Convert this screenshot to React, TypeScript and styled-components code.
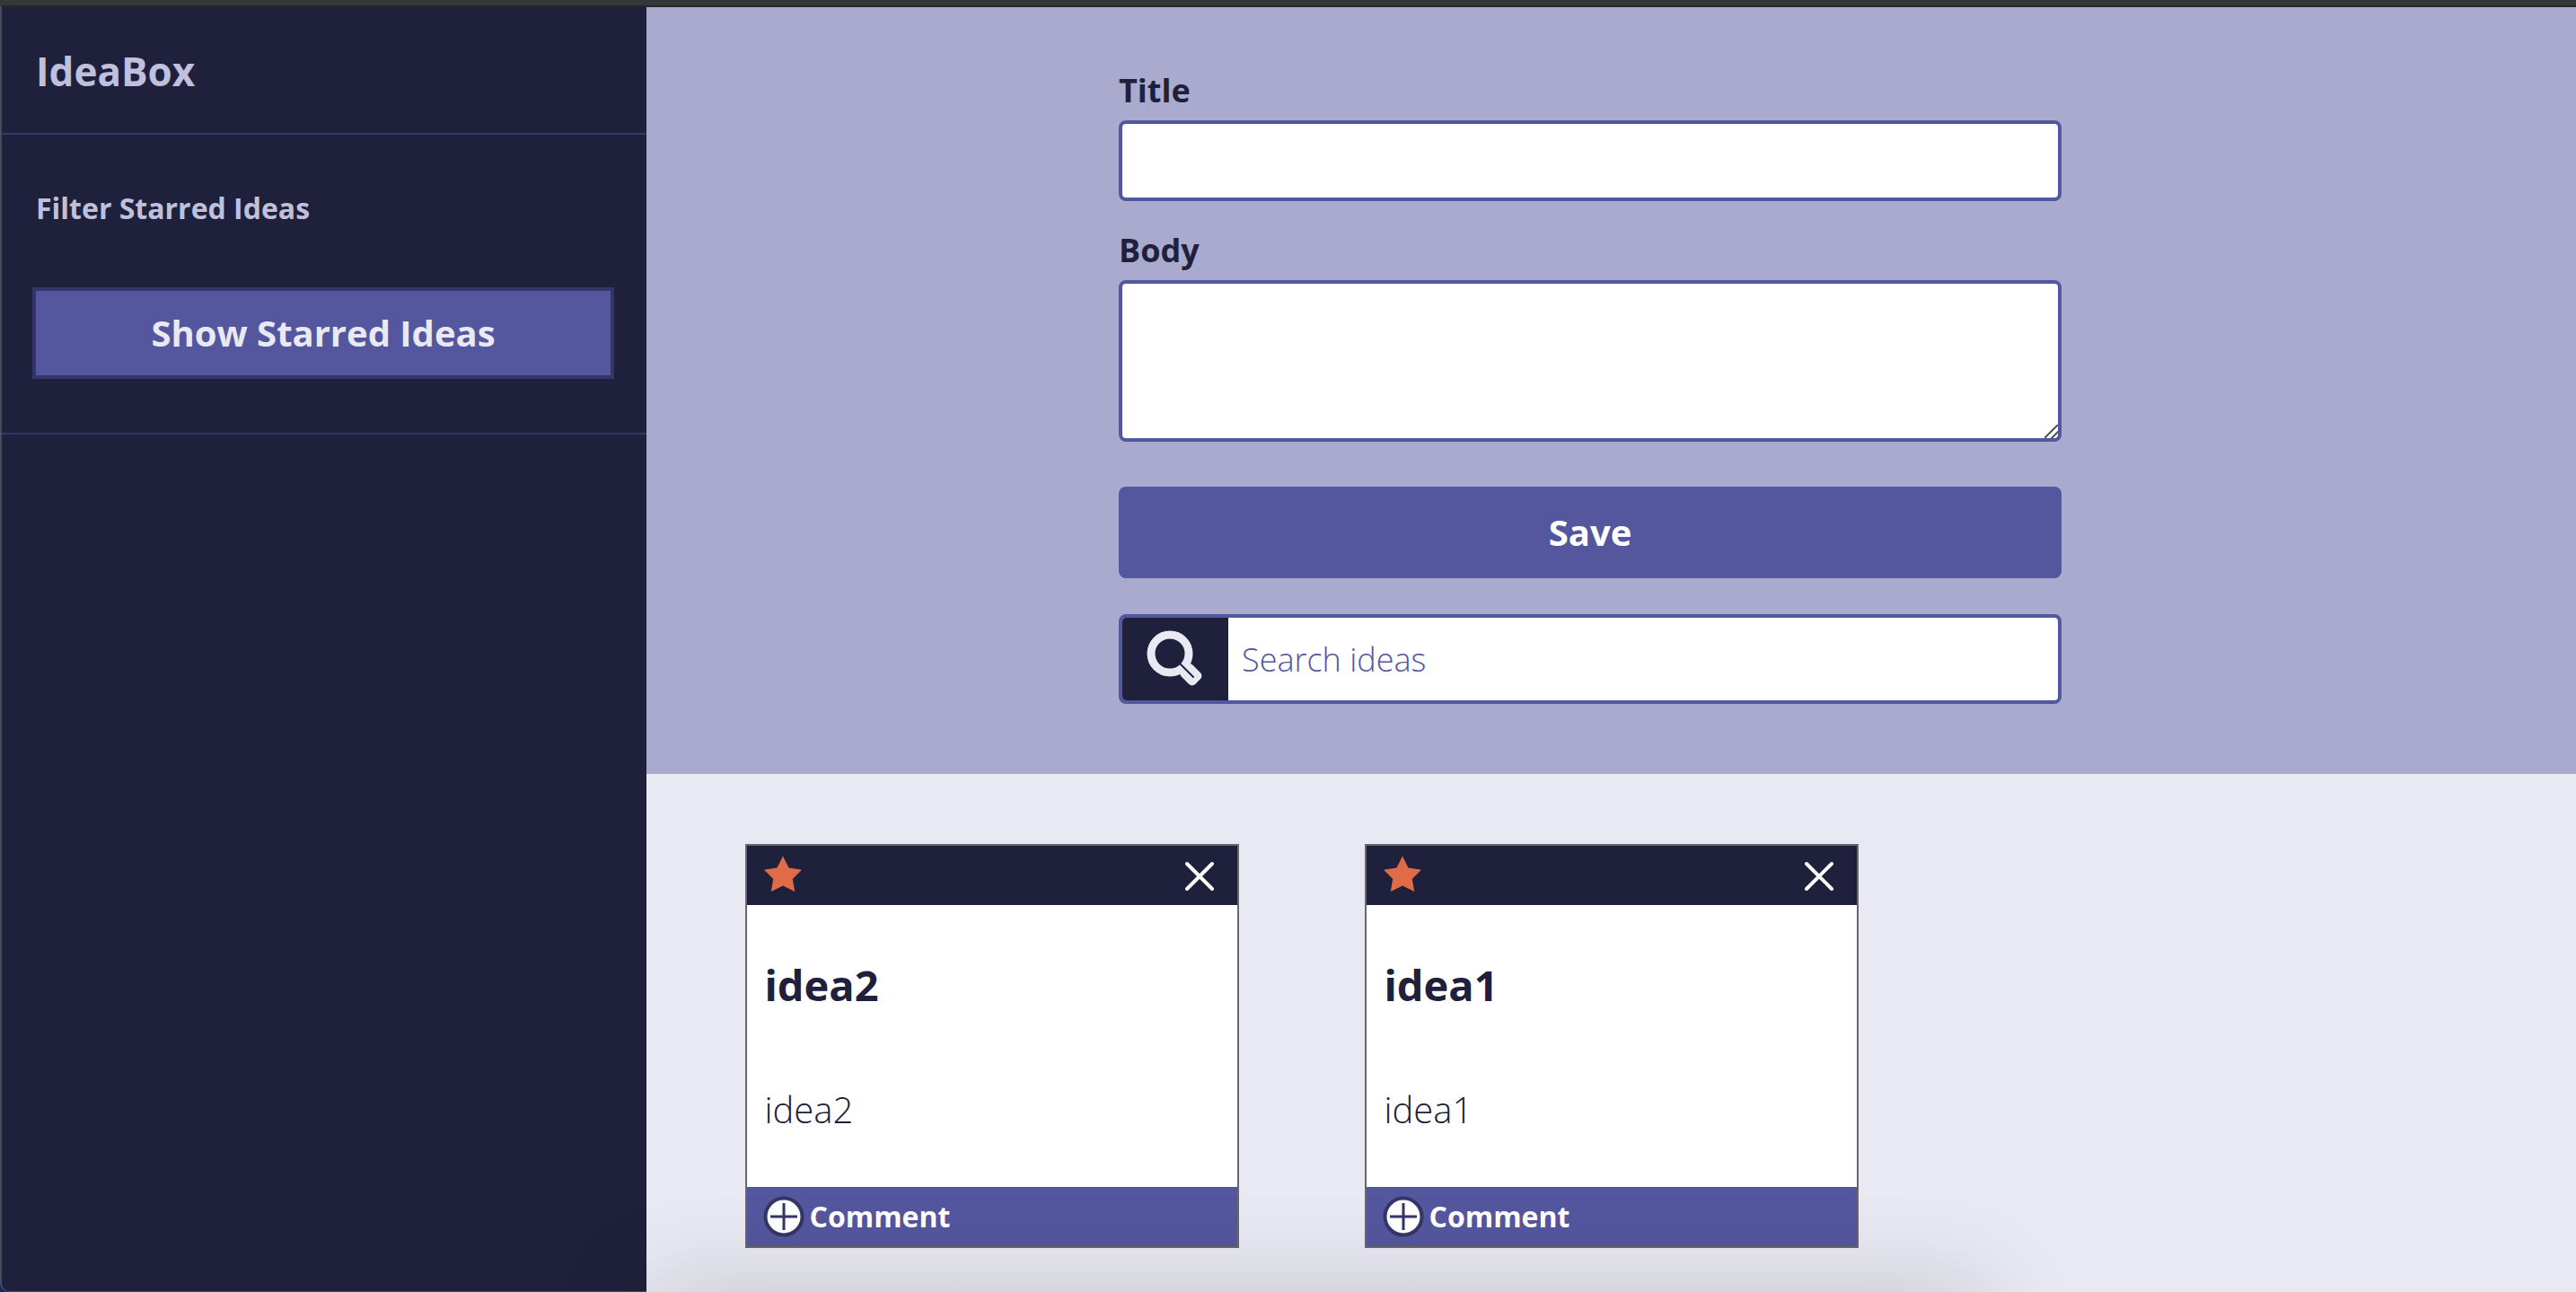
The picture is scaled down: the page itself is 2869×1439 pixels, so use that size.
import React from "react";
import styled, { createGlobalStyle } from "styled-components";

const colors = {
  ink: "#1f203b",
  line: "#353567",
  primary: "#5356a0",
  primaryButton: "#54579e",
  lavender: "#a9aace",
  mist: "#c0c0dc",
  pale: "#e9e9f3",
  star: "#e06b46",
  cardEdge: "#6b656d",
};

const Global = createGlobalStyle`
  *, *::before, *::after { box-sizing: border-box; }
  body {
    margin: 0;
    background: ${colors.pale};
    color: ${colors.ink};
    font-family: "Open Sans", "Noto Sans", sans-serif;
  }
  button, input, textarea { font-family: inherit; }
  h1, h2, h3, p { margin: 0; }
`;

const Page = styled.div`
  display: flex;
  min-height: 100vh;
  border-top: 6px solid #353638;
  background: #0d2c5c;
  overflow: hidden;
`;

const Sidebar = styled.aside`
  flex: 0 0 720px;
  background: ${colors.ink};
  color: ${colors.mist};
  border-top: 2px solid #262727;
  border-left: 2px solid #4a4a5e;
  border-bottom: 1px solid #4a4a5e;
  border-bottom-left-radius: 10px;
`;

const Brand = styled.header`
  padding: 41px 38px 38px;
  border-bottom: 2px solid ${colors.line};
`;

const BrandName = styled.h1`
  font-size: 44px;
  line-height: 61px;
`;

const Filter = styled.section`
  padding: 60px 36px 60px 34px;
  border-bottom: 2px solid ${colors.line};
`;

const FilterTitle = styled.h2`
  margin: 0 4px 66px;
  font-size: 32px;
  line-height: 44px;
`;

const FilterButton = styled.button`
  display: block;
  width: 100%;
  height: 102px;
  padding: 0 0 2px;
  border: 4px solid ${colors.line};
  background: ${colors.primaryButton};
  color: ${colors.pale};
  font-size: 40px;
  font-weight: 700;
`;

const Main = styled.main`
  flex: 1;
  min-width: 0;
  background: ${colors.pale};
`;

const FormPanel = styled.section`
  display: flex;
  justify-content: center;
  padding: 68px 47px 78px 0;
  background: ${colors.lavender};
  border-top: 2px solid #262727;
`;

const Form = styled.form`
  display: flex;
  flex-direction: column;
  width: 1050px;
`;

const Label = styled.label`
  margin-bottom: 9px;
  font-size: 36px;
  font-weight: 700;
  line-height: 49px;
`;

const TextField = styled.input`
  height: 90px;
  margin-bottom: 30px;
  padding: 0 16px;
  border: 4px solid ${colors.primary};
  border-radius: 8px;
  background: #fff;
  font-size: 36px;
`;

const TextArea = styled.textarea`
  height: 180px;
  margin-bottom: 50px;
  padding: 16px;
  border: 4px solid ${colors.primary};
  border-radius: 8px;
  background: #fff;
  font-size: 36px;
  resize: vertical;

  &::-webkit-resizer {
    background: linear-gradient(
      135deg,
      transparent 46%,
      #5c5c5c 46%,
      #5c5c5c 54%,
      transparent 54%,
      transparent 73%,
      #5c5c5c 73%,
      #5c5c5c 81%,
      transparent 81%
    );
  }
`;

const SaveButton = styled.button`
  height: 102px;
  margin-bottom: 40px;
  padding: 0 0 2px;
  border: 0;
  border-radius: 8px;
  background: ${colors.primaryButton};
  color: #fff;
  font-size: 40px;
  font-weight: 700;
`;

const SearchBar = styled.div`
  display: flex;
  height: 100px;
  border: 4px solid ${colors.primary};
  border-radius: 8px;
  background: #fff;
  overflow: hidden;
`;

const SearchButton = styled.button`
  display: flex;
  flex: 0 0 118px;
  align-items: center;
  justify-content: center;
  padding: 0;
  border: 0;
  background: ${colors.ink};
`;

const SearchInput = styled.input`
  flex: 1;
  min-width: 0;
  padding: 0 15px;
  border: 0;
  background: transparent;
  color: ${colors.primary};
  font-size: 36px;
  font-weight: 300;
  &::placeholder { color: ${colors.primary}; opacity: 1; }
`;

const Ideas = styled.section`
  display: grid;
  grid-template-columns: repeat(3, 550px);
  justify-content: center;
  gap: 80px 140px;
  padding: 78px 0 49px;
`;

const Card = styled.article`
  display: flex;
  flex-direction: column;
  min-height: 450px;
  border: 2px solid ${colors.cardEdge};
  background: #fff;
`;

const CardBar = styled.div<{ $tone: string }>`
  display: flex;
  align-items: center;
  justify-content: space-between;
  height: 66px;
  padding: 0 20px 0 18px;
  background: ${(p) => p.$tone};
`;

const IconButton = styled.button`
  display: flex;
  align-items: center;
  gap: 6px;
  padding: 0;
  border: 0;
  background: none;
  color: #fff;
  font-size: 32px;
  font-weight: 700;
  line-height: 44px;
`;

const CardBody = styled.div`
  flex: 1;
  padding: 57px 20px 40px;
`;

const CardTitle = styled.h3`
  font-size: 47px;
  line-height: 65px;
  margin-bottom: 79px;
`;

const CardText = styled.p`
  font-size: 40px;
  font-weight: 300;
  line-height: 54px;
`;

const BottomShadow = styled.div`
  position: fixed;
  left: 720px;
  right: 660px;
  top: 100%;
  height: 80px;
  box-shadow: 0 0 110px rgba(0, 0, 0, 0.18);
  pointer-events: none;
`;

const SearchIcon = () => (
  <svg width="64" height="64" viewBox="0 0 64 64" aria-hidden="true">
    <circle cx="26" cy="26" r="21" fill="none" stroke={colors.pale} strokeWidth="9" />
    <rect x="48" y="17" width="22" height="18" rx="5" fill={colors.pale} transform="rotate(45 26 26)" />
    <path d="M38 38 L52 52" stroke={colors.ink} strokeWidth="2" strokeLinecap="round" />
  </svg>
);

const StarIcon = () => (
  <svg width="44" height="44" viewBox="0 0 44 44" aria-hidden="true">
    <path
      d="M22 0.5 L28.5 13.5 L43 15.8 L32.8 26 L35.2 40 L22 33.5 L8.8 40 L11.2 26 L1 15.8 L15.5 13.5 Z"
      fill={colors.star}
    />
  </svg>
);

const CloseIcon = () => (
  <svg width="44" height="44" viewBox="0 0 44 44" aria-hidden="true">
    <path d="M8 9 L36 37 M36 9 L8 37" stroke="#fff" strokeWidth="4" strokeLinecap="round" />
  </svg>
);

const PlusIcon = () => (
  <svg width="46" height="46" viewBox="0 0 46 46" aria-hidden="true">
    <circle cx="23" cy="23" r="20.5" fill="#fff" stroke={colors.line} strokeWidth="4" />
    <path d="M23 8 V38 M8 23 H38" stroke={colors.line} strokeWidth="3" />
  </svg>
);

const ideas = [
  { id: 2, title: "idea2", body: "idea2" },
  { id: 1, title: "idea1", body: "idea1" },
];

export default function App() {
  return (
    <>
      <Global />
      <Page>
        <Sidebar>
          <Brand>
            <BrandName>IdeaBox</BrandName>
          </Brand>
          <Filter>
            <FilterTitle>Filter Starred Ideas</FilterTitle>
            <FilterButton type="button">Show Starred Ideas</FilterButton>
          </Filter>
        </Sidebar>
        <Main>
          <FormPanel>
            <Form onSubmit={(e) => e.preventDefault()}>
              <Label htmlFor="title">Title</Label>
              <TextField id="title" type="text" />
              <Label htmlFor="body">Body</Label>
              <TextArea id="body" />
              <SaveButton type="submit">Save</SaveButton>
              <SearchBar>
                <SearchButton type="button" aria-label="Search">
                  <SearchIcon />
                </SearchButton>
                <SearchInput type="search" aria-label="Search ideas" placeholder="Search ideas" />
              </SearchBar>
            </Form>
          </FormPanel>
          <Ideas>
            {ideas.map((idea) => (
              <Card key={idea.id}>
                <CardBar $tone={colors.ink}>
                  <IconButton type="button" aria-label="Unstar idea">
                    <StarIcon />
                  </IconButton>
                  <IconButton type="button" aria-label="Delete idea">
                    <CloseIcon />
                  </IconButton>
                </CardBar>
                <CardBody>
                  <CardTitle>{idea.title}</CardTitle>
                  <CardText>{idea.body}</CardText>
                </CardBody>
                <CardBar $tone={colors.primaryButton}>
                  <IconButton type="button">
                    <PlusIcon />
                    Comment
                  </IconButton>
                </CardBar>
              </Card>
            ))}
          </Ideas>
        </Main>
      </Page>
      <BottomShadow />
    </>
  );
}
